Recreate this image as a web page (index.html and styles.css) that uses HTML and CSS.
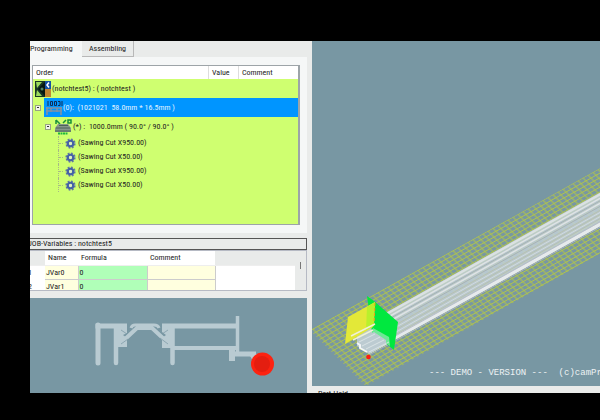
FILE: index.html
```html
<!DOCTYPE html>
<html lang="en">
<head>
<meta charset="utf-8">
<title>Programming</title>
<link rel="stylesheet" href="styles.css">
</head>
<body>
<svg class="defs" aria-hidden="true">
  <symbol id="gear" viewBox="0 0 12 12">
    <circle cx="6" cy="6" r="4.6" fill="none" stroke="#6378a0" stroke-width="2" stroke-dasharray="2 1.6"/>
    <circle cx="6" cy="6" r="3" fill="none" stroke="#4560a8" stroke-width="2.4"/>
    <circle cx="6" cy="6" r="1.6" fill="#dcebd0"/>
  </symbol>
</svg>
<main class="app">
  <section class="side">
    <nav class="tabs">
      <button class="tab active" type="button">Programming</button>
      <button class="tab" type="button">Assembling</button>
    </nav>
    <div class="page">
      <div class="tree">
        <div class="tree-head"><span>Order</span><span>Value</span><span>Comment</span></div>
        <div class="row root">
          <svg class="icon" viewBox="0 0 16 16"><path fill="#173525" d="M0 0h10v16H0z"/><path fill="#9ad95d" d="M1 1h6L2 7zM1 15h6L2 9z"/><path fill="#061710" d="M10 1v14L3 8z"/><circle cx="7" cy="8" r="1.5" fill="#508463"/><path fill="#1451a5" d="M10 0h6v8h-6z"/><path fill="#c18531" d="M10 8h6v8h-6z"/><path fill="none" stroke="#fff" stroke-width="1.5" d="M14 1.500l-2 2.500 2 2.500"/></svg>
          <span>(notchtest5) : ( notchtest )</span>
        </div>
        <div class="row bar">
          <button class="toggle" type="button" aria-label="Collapse bar"></button>
          <div class="label">
            <svg class="icon wide" viewBox="0 0 18 16"><path d="M3 1v5M5.500 1.500h2v4h-2zM9.500 1.500h2v4h-2zM13 1.500h2v4h-2M17 1v5" fill="none" stroke="#102c55"/><path d="M1 8h16M1 11h16M2 7v8M6 8v4M12 8v4M16 7v8" fill="none" stroke="#7f93a6" stroke-width="1.600"/></svg>
            <span>(0):&nbsp; (1021021&nbsp; 58.0mm * 16.5mm )</span>
          </div>
        </div>
        <div class="row piece">
          <button class="toggle" type="button" aria-label="Collapse piece"></button>
          <svg class="icon wide" viewBox="0 0 18 16"><path d="M2 1l4 4M2 5V1M9 4l3-3M14 1h3v3h-3z" fill="none" stroke="#19913a" stroke-width="1.500"/><path d="M4 5h10l3 4v4H1V9z" fill="#87958c"/><path d="M2 9h14M5 6.500h9M1 12h16" stroke="#4b6456" stroke-width="1"/><path d="M4 14.500h10" stroke="#20b83c" stroke-width="2" stroke-dasharray="2 .5"/></svg>
          <span>(*) :&nbsp; 1000.0mm ( 90.0° / 90.0° )</span>
        </div>
        <ul class="cuts">
          <li><svg class="gear"><use href="#gear"/></svg>(Sawing Cut X950.00)</li>
          <li><svg class="gear"><use href="#gear"/></svg>(Sawing Cut X50.00)</li>
          <li><svg class="gear"><use href="#gear"/></svg>(Sawing Cut X950.00)</li>
          <li><svg class="gear"><use href="#gear"/></svg>(Sawing Cut X50.00)</li>
        </ul>
      </div>
    </div>
    <h2 class="vars-title"><span>JOB-Variables : notchtest5</span></h2>
    <div class="vars">
      <table>
        <thead><tr><th class="num"></th><th class="name">Name</th><th class="formula">Formula</th><th class="comment">Comment</th><th class="rest"></th></tr></thead>
        <tbody>
          <tr><td class="num">1</td><td class="name">JVar0</td><td class="formula">0</td><td class="comment"></td><td class="rest"></td></tr>
          <tr><td class="num">2</td><td class="name">JVar1</td><td class="formula">0</td><td class="comment"></td><td class="rest"></td></tr>
        </tbody>
      </table>
      <div class="scroll"><i></i></div>
    </div>
    <div class="profile">
      <svg viewBox="0 0 277 95" preserveAspectRatio="xMinYMin meet">
        <g fill="none" stroke="#b9cbd2" stroke-width="5">
          <path d="M68 65V27" stroke-linecap="round"/>
          <path d="M86 65V30M142.500 65V30" stroke-linecap="round" stroke-width="4.500"/>
          <path d="M65.500 28H97M132 28h76"/>
          <path d="M93 43l14-13h15l14 13" stroke-width="4"/>
          <path d="M101 30q1-3 4-3h19q4 0 5 3" stroke-width="3"/>
          <path d="M142 50h66" stroke-width="4"/>
          <path d="M207.500 18v40" stroke-width="3.500"/>
          <path d="M200 56h26" stroke-width="5"/>
        </g>
        <path d="M84 26h13v9l-4 2 4 3v9H84zM132 26h12v24h-12V40l4-3-4-3zM199 49h6v14h-6zM219 56h8v7h-4z" fill="#b9cbd2"/>
        <path d="M91 32l6 4M91 46l7-5M138 32l-6 4M138 46l-8-6" stroke="#7897a3" stroke-width=".7"/>
        <circle cx="232.500" cy="66" r="11.500" fill="#fc2311"/>
        <circle cx="232" cy="66" r="8" fill="#e41e10"/>
      </svg>
    </div>
  </section>
  <section class="view">
    <div class="scene">
      <svg viewBox="0 0 288 345" preserveAspectRatio="xMinYMax meet">
        <defs>
          <pattern id="mesh" width="10" height="10" patternUnits="userSpaceOnUse" patternTransform="matrix(.5 -.28 .3 .3 0 291)">
            <path d="M0 5h10M5 0v10" stroke="#b3c646" stroke-width="1.700"/>
          </pattern>
        </defs>
        <path d="M0 288L328 105V190L54 345 0 291z" fill="url(#mesh)"/>
        <path d="M45 291L75 271 328 129V163L143 266 57 313 45 305z" fill="#c2d0d6" fill-opacity=".84"/>
        <g fill="none">
          <path d="M62 280L328 131" stroke="#dbe1e2" stroke-width="2.500"/>
          <path d="M62 284L328 135M62 289L328 140" stroke="#dfe3e4" stroke-width="1.500"/>
          <path d="M62 286.500L328 137.500M62 292L328 143" stroke="#a4aeb6" stroke-width=".9"/>
          <path d="M62 296L328 147M62 301L328 151M62 306L328 155" stroke="#b5bbb0" stroke-width=".8"/>
          <path d="M62 298.500L328 149M62 303.500L328 153" stroke="#d3dade"/>
          <path d="M57 311L143 264 328 161" stroke="#e6eaec" stroke-width="3.500"/>
          <path d="M58 309L143 262 328 158.500M58 313.500L143 267 328 164" stroke="#b4b9c4" stroke-width=".8"/>
        </g>
        <path d="M55 255l7 5 24 21-4 28-22-18z" fill="#00e83f"/>
        <path d="M36 276l27-15-2 25-28 17z" fill="#e3e838"/>
        <path d="M55 266l8-5-1 24-8 4z" fill="#b9f02c"/>
        <path d="M63 262l-1 22" stroke="#f59a1c" stroke-dasharray="3 2"/>
        <path d="M61 287l16 9 1 9-18-13z" fill="#6fe895"/>
        <path d="M39 295l24-12M41 299l20-10" stroke="#eff0d8" stroke-width="1.500"/>
        <path d="M45 301l17-10 12 8v4l-17 10-4-4-7-5z" fill="#bccbd1"/>
        <path d="M45 302l3 2v3l7 4" fill="none" stroke="#f4f6f7" stroke-width="2"/>
        <path d="M47 301l16-8M50 305l18-9M54 308l18-9M57 311l20-10" fill="none" stroke="#e1e8ea" stroke-width=".8"/>
        <circle cx="56.500" cy="316" r="2.300" fill="#ff1b10"/>
      </svg>
      <p class="demo">--- DEMO - VERSION ---&nbsp; (c)camPr</p>
    </div>
    <div class="footer">Part-Hold</div>
  </section>
</main>
</body>
</html>
```
FILE: styles.css
```css
* { box-sizing: border-box; }
html, body { height: 100%; }
body {
  margin: 0;
  padding: 41px 0 27px 30px;
  background: #000;
  color: #222;
  font: 8px/12px "Roboto Condensed", Lato, "Liberation Sans", sans-serif;
  overflow: hidden;
}
.defs { position: absolute; width: 0; height: 0; }
button { font: inherit; color: inherit; margin: 0; padding: 0; border: 0; }
svg { display: block; }
.app { display: grid; grid-template-columns: minmax(0, 281fr) minmax(0, 289fr); height: 100%; background: #e9ebea; }
.side { display: flex; flex-direction: column; min-width: 0; overflow: hidden; padding-right: 4px; }
.tabs { display: flex; height: 16px; }
.tab { width: 52px; background: #e9ebea; border-right: 1px solid #b8b8b8; border-bottom: 1px solid #b8b8b8; white-space: nowrap; }
.tab.active { background: #f5f7f7; border: 0; text-align: left; }
.page { background: #f5f7f7; padding: 8px 7px 8px 2px; }
.tree { height: 160px; background: #cfff70; border: 1px solid #9da4a8; border-width: 1px 2px 1px 1px; white-space: nowrap; }
.tree-head { display: grid; grid-template-columns: 1fr 30px 60px; height: 13px; background: #fff; line-height: 13px; }
.tree-head span { padding-left: 3px; }
.tree-head span + span { border-left: 1px solid #ddd; }
.row { display: flex; align-items: center; height: 19px; }
.root { padding-left: 2px; gap: 1px; }
.icon { width: 16px; height: 16px; flex: none; }
.icon.wide { width: 18px; }
.bar { padding-left: 2px; gap: 3px; }
.label { display: flex; align-items: center; flex: 1; height: 100%; padding-left: 1px; background: #0095ff; color: #e2f3ff; }
.toggle { width: 6px; height: 6px; flex: none; display: flex; align-items: center; justify-content: center; background: #f2f4ea; border: 1px solid #98a484; }
.toggle::before { content: ""; width: 2px; height: 1px; background: #333; }
.piece { padding-left: 12px; gap: 3px; }
.piece .icon { margin-right: -2px; }
.cuts { margin: 0 0 0 25px; padding: 0; list-style: none; }
.cuts li { display: flex; align-items: center; gap: 2px; height: 14px; border-left: 1px dotted #a6b985; }
.cuts li::before { content: ""; width: 4px; border-top: 1px dotted #a6b985; }
.gear { width: 11px; height: 11px; }
.vars-title { display: flex; margin: 5px 0 0; height: 12px; border: 1px solid #555; border-left: 0; font: inherit; line-height: 10px; overflow: hidden; }
.vars-title span { margin-left: -2px; }
.vars { display: flex; height: 41px; overflow: hidden; background: #e9ebea; border: 1px solid #b6bac4; border-left: 0; }
table { flex: 1; min-width: 0; border-collapse: collapse; table-layout: fixed; background: #fff; }
th, td { height: 14px; padding: 0 0 0 1px; font-weight: 400; text-align: left; line-height: 13px; border-bottom: 1px solid #ccc; }
th { padding-left: 3px; border-bottom-color: #eee; }
.num { width: 15px; padding: 0; }
td.num { text-indent: -2px; border-color: #fff; }
.name { width: 33px; }
.formula { width: 69px; }
.comment { width: 68px; }
th.num, th.rest { background: #e9ebea; }
td.name, td.comment { background: #ffffdf; border-right: 1px solid #ccc; }
td.formula { background: #b0ffb8; border-right: 1px solid #ccc; }
td.rest { border-color: #fff; }
.scroll { width: 11px; padding: 11px 0 0 5px; }
.scroll i { display: block; width: 1px; height: 7px; background: #777; }
.profile { flex: 1; min-height: 0; margin-top: 7px; background: #7897a3; }
.profile svg { width: 100%; height: 100%; }
.view { display: flex; flex-direction: column; min-width: 0; min-height: 0; padding-left: 1px; }
.scene { position: relative; flex: 1; min-height: 0; overflow: hidden; background: #7897a3; }
.scene svg { width: 100%; height: 100%; }
.demo { position: absolute; left: 117px; bottom: 7px; margin: 0; color: #edf2f4; font: 9px/12px "Liberation Mono", monospace; white-space: nowrap; }
.footer { height: 7px; padding: 4px 0 0 6px; line-height: 8px; overflow: hidden; }
```
